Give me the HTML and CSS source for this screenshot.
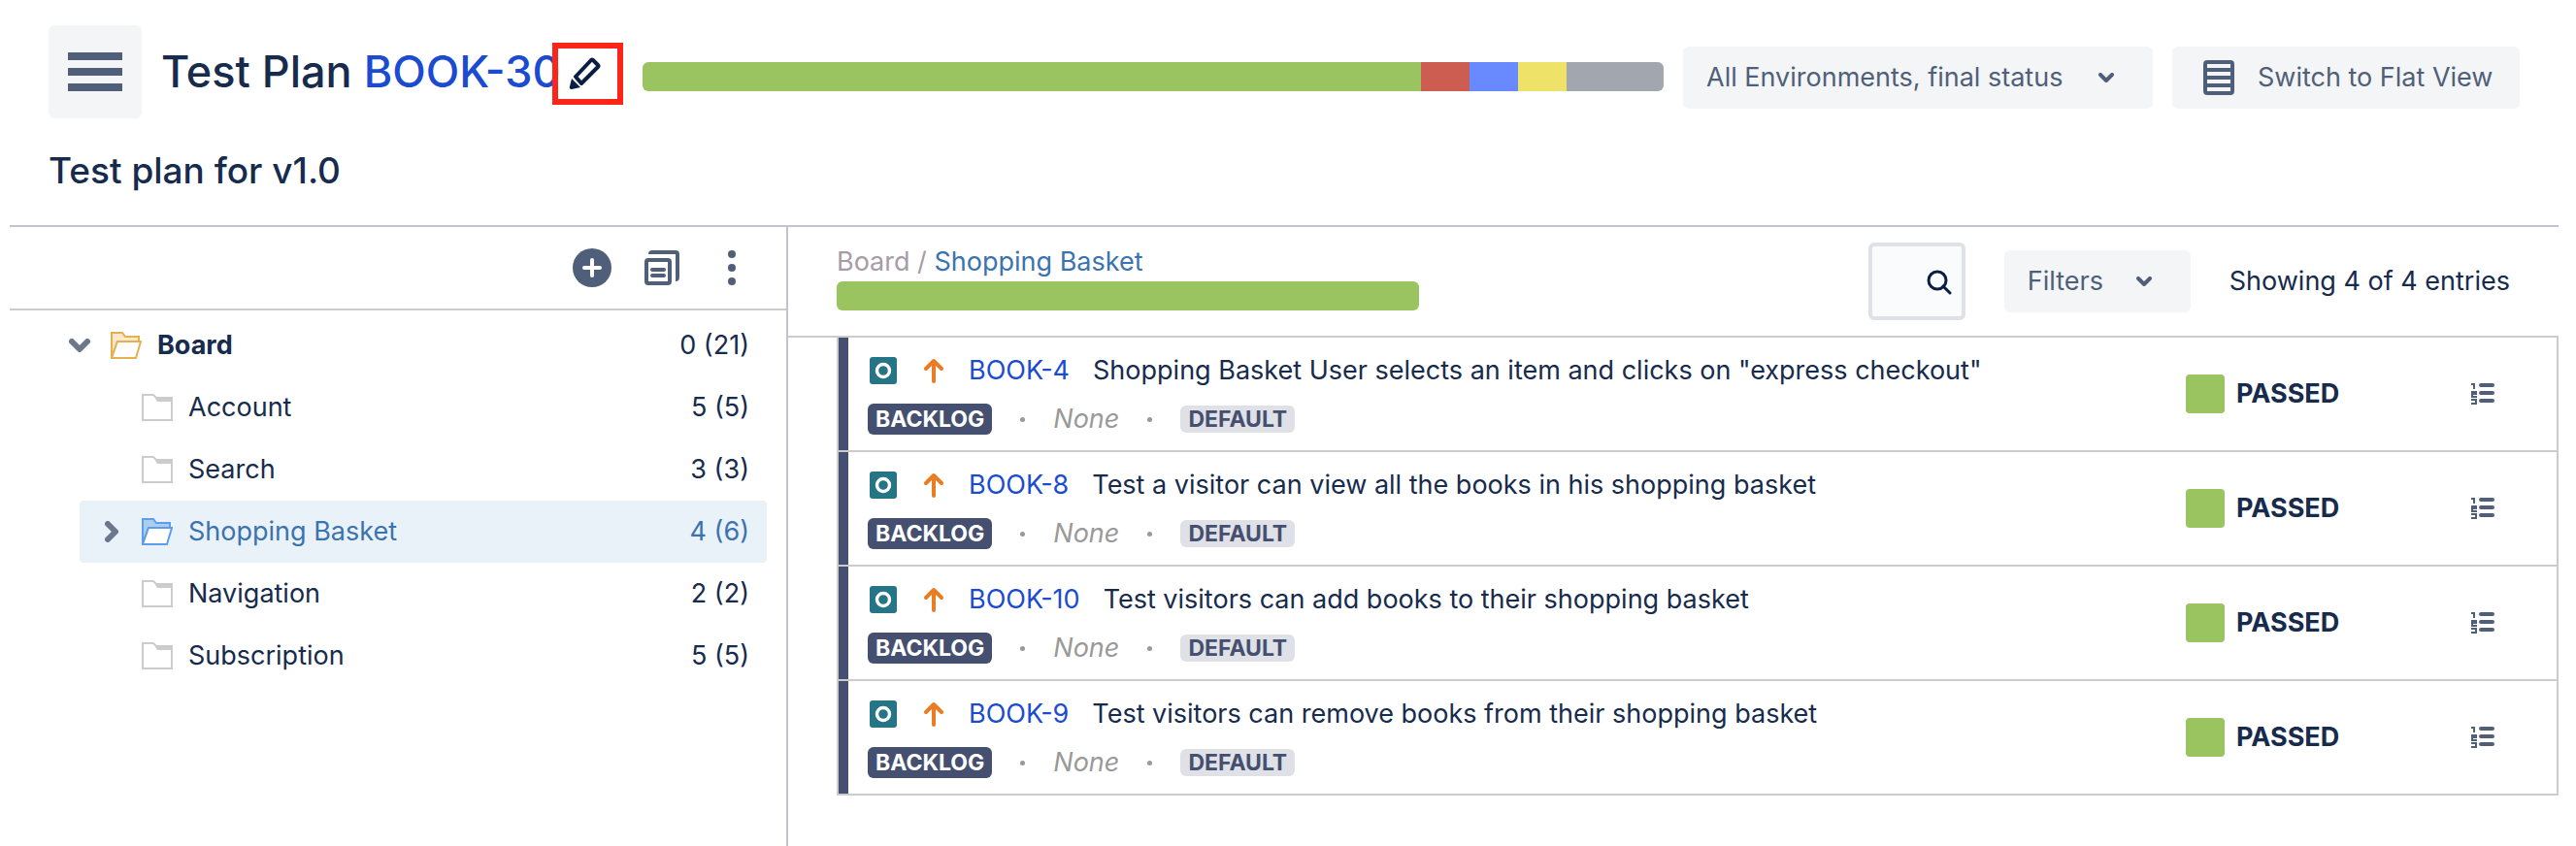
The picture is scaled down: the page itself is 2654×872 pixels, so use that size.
FILE: index.html
```html
<!DOCTYPE html>
<html lang="en">

<head>
    <meta charset="UTF-8">
    <meta name="viewport" content="width=device-width, initial-scale=1.0">
    <title>Test Plan BOOK-30</title>
    <link rel="stylesheet" href="styles.css">
</head>

<body>
    <!-- icons used more than once -->
    <svg class="sprite" width="0" height="0">
        <symbol id="i-down" viewBox="0 0 16 10">
            <path d="M2 2l6 6 6-6" fill="none" stroke="currentColor" stroke-width="4" stroke-linecap="round" stroke-linejoin="round" />
        </symbol>
        <symbol id="i-folder" viewBox="0 0 32 28">
            <path d="M12 1l4 7h15V4H14z" fill="#ccc" />
            <path d="M1 27V1h11l3 3h16v23z" fill="none" stroke="#ccc" stroke-width="2" />
        </symbol>
        <symbol id="i-open" viewBox="0 0 32 28">
            <path class="back" d="M1 27V1h11l3 4h14v5H7z" />
            <path class="front" d="M1 27L7 10h24l-5 17z" />
        </symbol>
        <symbol id="i-test" viewBox="0 0 28 28">
            <rect width="28" height="28" rx="3" fill="#267587" />
            <circle cx="14" cy="14" r="6.5" fill="none" stroke="#fff" stroke-width="3.4" />
        </symbol>
        <symbol id="i-up" viewBox="0 0 20 26">
            <path d="M10 24V3M2 11l8-8 8 8" fill="none" stroke="#ea7d24" stroke-width="4" stroke-linecap="round" stroke-linejoin="round" />
        </symbol>
        <symbol id="i-steps" viewBox="0 0 24 22">
            <path d="M10 2h12M10 10h12M10 18h12" stroke="currentColor" stroke-width="4" stroke-linecap="round" />
            <path d="M0 1h3v5M0 9h5v2H1v3h5M0 17h5v4H0" fill="none" stroke="currentColor" stroke-width="2" />
        </symbol>
    </svg>

    <header class="header">
        <button class="menu" type="button" aria-label="Menu"><span></span><span></span><span></span></button>
        <h1 class="title">Test Plan <a href="#">BOOK-30</a></h1>
        <button class="edit" type="button" aria-label="Edit">
            <svg width="34" height="34" viewBox="0 0 34 34">
                <path d="M7 20L23 3q1-1 2 0l5 5q1 1 0 2L13 27z" fill="none" stroke="#091e42" stroke-width="4" stroke-linejoin="round" />
                <path d="M3 22l9 9-9 2q-3 0-2-3z" fill="#091e42" />
            </svg>
        </button>
        <div class="progress">
            <i class="passed" style="flex-grow: 16"></i>
            <i class="failed" style="flex-grow: 1"></i>
            <i class="todo" style="flex-grow: 1"></i>
            <i class="executing" style="flex-grow: 1"></i>
            <i class="aborted" style="flex-grow: 2"></i>
        </div>
        <button class="btn env" type="button">All Environments, final status <svg width="16" height="10"><use href="#i-down" /></svg></button>
        <button class="btn flat" type="button">
            <svg width="32" height="36" viewBox="0 0 32 36">
                <rect x="2" y="2" width="28" height="32" rx="2" fill="none" stroke="currentColor" stroke-width="4" />
                <path d="M2 10h28M2 18h28M2 26h28" stroke="currentColor" stroke-width="4" />
            </svg>
            Switch to Flat View
        </button>
    </header>
    <h2 class="subtitle">Test plan for v1.0</h2>

    <main class="main">
        <aside class="side">
            <div class="tools">
                <button type="button" aria-label="Add">
                    <svg width="40" height="40" viewBox="0 0 40 40">
                        <circle cx="20" cy="20" r="20" fill="currentColor" />
                        <path d="M20 12v16M12 20h16" stroke="#fff" stroke-width="4" stroke-linecap="round" />
                    </svg>
                </button>
                <button type="button" aria-label="Copy">
                    <svg width="36" height="36" viewBox="0 0 36 36">
                        <path d="M4 4q0-4 4-4h24q4 0 4 4v24q0 4-4 4V4z" fill="currentColor" />
                        <rect x="2" y="10" width="24" height="24" rx="2" fill="none" stroke="currentColor" stroke-width="4" />
                        <path d="M8 20h12M8 26h12" stroke="currentColor" stroke-width="4" stroke-linecap="round" />
                    </svg>
                </button>
                <button class="more" type="button" aria-label="More">
                    <svg width="8" height="36" viewBox="0 0 8 36" fill="currentColor">
                        <circle cx="4" cy="4" r="4" /><circle cx="4" cy="18" r="4" /><circle cx="4" cy="32" r="4" />
                    </svg>
                </button>
            </div>
            <ul class="tree">
                <li class="root">
                    <svg class="arrow" width="22" height="14" viewBox="0 0 22 14"><path d="M3 3l8 8 8-8" /></svg>
                    <svg class="folder" width="32" height="28"><use href="#i-open" /></svg>
                    <span>Board</span><em>0 (21)</em>
                </li>
                <li>
                    <svg class="folder" width="32" height="28"><use href="#i-folder" /></svg>
                    <span>Account</span><em>5 (5)</em>
                </li>
                <li>
                    <svg class="folder" width="32" height="28"><use href="#i-folder" /></svg>
                    <span>Search</span><em>3 (3)</em>
                </li>
                <li class="current">
                    <svg class="arrow" width="14" height="22" viewBox="0 0 14 22"><path d="M3 3l8 8-8 8" /></svg>
                    <svg class="folder" width="32" height="28"><use href="#i-open" /></svg>
                    <span>Shopping Basket</span><em>4 (6)</em>
                </li>
                <li>
                    <svg class="folder" width="32" height="28"><use href="#i-folder" /></svg>
                    <span>Navigation</span><em>2 (2)</em>
                </li>
                <li>
                    <svg class="folder" width="32" height="28"><use href="#i-folder" /></svg>
                    <span>Subscription</span><em>5 (5)</em>
                </li>
            </ul>
        </aside>

        <section class="content">
            <div class="bar">
                <div class="crumb">
                    <p>Board / <a href="#">Shopping Basket</a></p>
                    <div class="progress"><i class="passed" style="flex-grow: 1"></i></div>
                </div>
                <label class="search">
                    <input type="text" name="search" aria-label="Search">
                    <svg width="26" height="26" viewBox="0 0 26 26">
                        <circle cx="11" cy="11" r="9" fill="none" stroke="#091e42" stroke-width="3" />
                        <path d="M17 17l7 7" stroke="#091e42" stroke-width="3" stroke-linecap="round" />
                    </svg>
                </label>
                <button class="btn filters" type="button">Filters <svg width="16" height="10"><use href="#i-down" /></svg></button>
                <span class="count">Showing 4 of 4 entries</span>
            </div>
            <ul class="list">
                <li>
                    <div class="info">
                        <p class="name">
                            <svg width="28" height="28"><use href="#i-test" /></svg>
                            <svg class="up" width="20" height="26"><use href="#i-up" /></svg>
                            <a href="#">BOOK-4</a><span>Shopping Basket User selects an item and clicks on "express checkout"</span>
                        </p>
                        <p class="meta"><b class="backlog">BACKLOG</b><i class="dot"></i><em>None</em><i class="dot"></i><b class="default">DEFAULT</b></p>
                    </div>
                    <p class="status">PASSED</p>
                    <button class="steps" type="button" aria-label="Steps"><svg width="24" height="22"><use href="#i-steps" /></svg></button>
                </li>
                <li>
                    <div class="info">
                        <p class="name">
                            <svg width="28" height="28"><use href="#i-test" /></svg>
                            <svg class="up" width="20" height="26"><use href="#i-up" /></svg>
                            <a href="#">BOOK-8</a><span>Test a visitor can view all the books in his shopping basket</span>
                        </p>
                        <p class="meta"><b class="backlog">BACKLOG</b><i class="dot"></i><em>None</em><i class="dot"></i><b class="default">DEFAULT</b></p>
                    </div>
                    <p class="status">PASSED</p>
                    <button class="steps" type="button" aria-label="Steps"><svg width="24" height="22"><use href="#i-steps" /></svg></button>
                </li>
                <li>
                    <div class="info">
                        <p class="name">
                            <svg width="28" height="28"><use href="#i-test" /></svg>
                            <svg class="up" width="20" height="26"><use href="#i-up" /></svg>
                            <a href="#">BOOK-10</a><span>Test visitors can add books to their shopping basket</span>
                        </p>
                        <p class="meta"><b class="backlog">BACKLOG</b><i class="dot"></i><em>None</em><i class="dot"></i><b class="default">DEFAULT</b></p>
                    </div>
                    <p class="status">PASSED</p>
                    <button class="steps" type="button" aria-label="Steps"><svg width="24" height="22"><use href="#i-steps" /></svg></button>
                </li>
                <li>
                    <div class="info">
                        <p class="name">
                            <svg width="28" height="28"><use href="#i-test" /></svg>
                            <svg class="up" width="20" height="26"><use href="#i-up" /></svg>
                            <a href="#">BOOK-9</a><span>Test visitors can remove books from their shopping basket</span>
                        </p>
                        <p class="meta"><b class="backlog">BACKLOG</b><i class="dot"></i><em>None</em><i class="dot"></i><b class="default">DEFAULT</b></p>
                    </div>
                    <p class="status">PASSED</p>
                    <button class="steps" type="button" aria-label="Steps"><svg width="24" height="22"><use href="#i-steps" /></svg></button>
                </li>
            </ul>
        </section>
    </main>
</body>

</html>
```
FILE: styles.css
```css
* {
    margin: 0;
    padding: 0;
    box-sizing: border-box;
}

body {
    font-family: Inter, "Liberation Sans", sans-serif;
    font-size: 27px;
    line-height: 40px;
    color: #172b4d;
    background: #fff;
}

a {
    color: #1b4bd1;
    text-decoration: none;
}

ul {
    list-style: none;
}

button {
    border: none;
    background: none;
    font: inherit;
    color: #505f79;
    cursor: pointer;
}

svg {
    display: block;
    flex: none;
}

.sprite {
    position: absolute;
}

/* header */
.header {
    display: flex;
    align-items: center;
    height: 148px;
    padding: 0 58px 0 50px;
}

.menu {
    display: flex;
    flex-direction: column;
    flex: none;
    gap: 8px;
    width: 96px;
    height: 96px;
    padding: 28px 20px;
    background: #f4f5f7;
    border-radius: 6px;
}

.menu span {
    height: 8px;
    background: #505f79;
}

.title {
    flex: none;
    width: 403px;
    margin-left: 20px;
    font-size: 45px;
    font-weight: 500;
    line-height: 56px;
    white-space: nowrap;
}

.edit {
    position: relative;
    flex: none;
    display: flex;
    align-items: center;
    width: 73px;
    height: 64px;
    margin-top: 4px;
    padding-left: 11px;
    border: 6px solid #fb2618;
}

.progress {
    display: flex;
    height: 30px;
    border-radius: 6px;
    overflow: hidden;
}

.progress .passed {
    background: #9ac460;
}

.progress .failed {
    background: #cd5c51;
}

.progress .todo {
    background: #6889ff;
}

.progress .executing {
    background: #eee269;
}

.progress .aborted {
    background: #a2a6ae;
}

.header .progress {
    flex: 1;
    margin: 10px 20px 0;
}

.btn {
    display: flex;
    flex: none;
    align-items: center;
    height: 64px;
    padding: 0 24px;
    background: #f4f5f7;
    border-radius: 6px;
    white-space: nowrap;
}

.header .btn {
    margin-top: 12px;
}

.env,
.filters {
    justify-content: space-between;
    padding-right: 40px;
}

.env {
    width: 484px;
    margin-right: 20px;
}

.flat {
    gap: 24px;
    width: 358px;
    padding-left: 32px;
}

.subtitle {
    margin-left: 50px;
    height: 84px;
    font-size: 37px;
    font-weight: 500;
    line-height: 56px;
}

/* main */
.main {
    display: flex;
    margin: 0 18px 0 10px;
    min-height: 640px;
    border-top: 2px solid #c1c4d0;
}

.side {
    flex: none;
    width: 802px;
    border-right: 2px solid #c1c4d0;
}

.tools {
    display: flex;
    align-items: center;
    justify-content: flex-end;
    gap: 34px;
    height: 86px;
    padding-right: 52px;
    border-bottom: 2px solid #ccc;
}

.more {
    margin-left: 16px;
}

.tree {
    margin: 4px 20px 0 72px;
}

.tree li {
    position: relative;
    display: flex;
    align-items: center;
    height: 64px;
    padding: 0 18px 0 64px;
    border-radius: 4px;
}

.tree .root {
    padding-left: 32px;
}

.tree span {
    flex: 1;
    margin-left: 16px;
}

.tree .root span {
    font-weight: 700;
}

.tree em {
    font-style: normal;
}

.tree .current {
    color: #3b73af;
    background: #eaf2f9;
}

.arrow {
    position: absolute;
    left: 26px;
    fill: none;
    stroke: #6b778c;
    stroke-width: 6;
    stroke-linecap: round;
    stroke-linejoin: round;
}

.root .arrow {
    left: -11px;
}

.folder {
    stroke-width: 2;
}

.root .folder {
    stroke: #e5b04e;
    fill: #f9e8cd;
}

.current .folder {
    stroke: #5c9ded;
    fill: #aecdec;
}

.front {
    fill: #fff;
}

.content {
    flex: 1;
}

.bar {
    display: flex;
    align-items: center;
    height: 114px;
    padding: 0 50px;
    border-bottom: 2px solid #ccc;
}

.crumb {
    width: 600px;
    margin-right: auto;
    padding-bottom: 10px;
    color: #a79ba7;
}

.crumb a {
    color: #3b73af;
}

.search {
    position: relative;
    width: 100px;
    height: 80px;
    margin-right: 40px;
}

.search input {
    width: 100%;
    height: 100%;
    padding: 0 36px 0 8px;
    border: 4px solid #dfe1e6;
    border-radius: 6px;
    background: #fafbfc;
    font: inherit;
}

.search svg {
    position: absolute;
    right: 14px;
    top: 28px;
}

.filters {
    width: 192px;
    margin-right: 40px;
}

/* test list */
.list {
    margin-left: 50px;
    border: 2px solid #ccc;
    border-top: none;
}

.list li {
    display: flex;
    align-items: center;
    height: 118px;
    padding-right: 64px;
    border-bottom: 2px solid #ccc;
}

.list li:last-child {
    height: 116px;
    border-bottom: none;
}

.info {
    flex: 1;
    height: 116px;
    padding: 14px 0 0 20px;
    border-left: 10px solid #454f6f;
}

.name {
    display: flex;
    align-items: center;
    padding-left: 2px;
}

.up {
    margin: 0 26px 0 28px;
}

.name span {
    margin-left: 24px;
}

.meta {
    display: flex;
    align-items: center;
    margin-top: 10px;
}

.meta b {
    padding: 0 8px;
    border-radius: 6px;
    font-size: 23px;
    line-height: 32px;
}

.meta em {
    color: #999;
}

.backlog {
    color: #fff;
    background: #454f6f;
}

.meta .default {
    color: #454f6f;
    line-height: 28px;
    background: #dfe1e6;
}

.dot {
    width: 5px;
    height: 5px;
    margin: 0 29px;
    border-radius: 50%;
    background: #999;
}

.status {
    display: flex;
    align-items: center;
    width: 294px;
    font-weight: 700;
}

.status::before {
    content: "";
    width: 40px;
    height: 40px;
    margin-right: 12px;
    border-radius: 4px;
    background: #9ac460;
}
```
